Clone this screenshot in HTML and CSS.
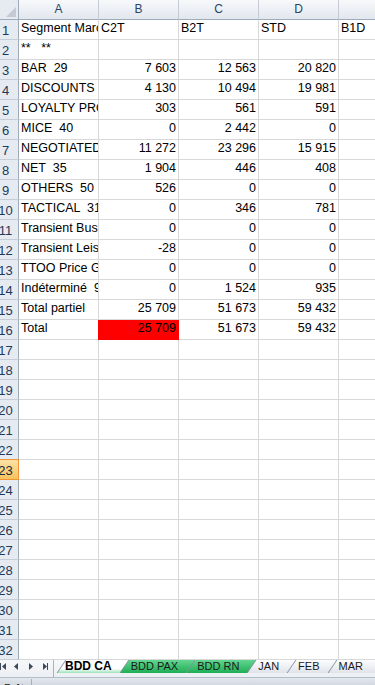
FILE: index.html
```html
<!DOCTYPE html>
<html lang="fr">
    <head>
        <meta charset="UTF-8">
        <meta name="viewport" content="width=device-width, initial-scale=1.0">
        <title>BDD CA</title>
        <link rel="stylesheet" href="styles.css">
    </head>
    <body>
        <div class="sheet">
            <div class="row head">
                <div class="corner"></div>
                <div class="col">A</div>
                <div class="col">B</div>
                <div class="col">C</div>
                <div class="col">D</div>
                <div class="col">E</div>
            </div>
            <div class="row"><div class="rh">1</div><div>Segment Marché</div><div>C2T</div><div>B2T</div><div>STD</div><div>B1D</div></div>
            <div class="row"><div class="rh">2</div><div>**   **</div><div></div><div></div><div></div><div></div></div>
            <div class="row"><div class="rh">3</div><div>BAR  29</div><div class="num">7 603</div><div class="num">12 563</div><div class="num">20 820</div><div></div></div>
            <div class="row"><div class="rh">4</div><div>DISCOUNTS  32</div><div class="num">4 130</div><div class="num">10 494</div><div class="num">19 981</div><div></div></div>
            <div class="row"><div class="rh">5</div><div>LOYALTY PROGRAM</div><div class="num">303</div><div class="num">561</div><div class="num">591</div><div></div></div>
            <div class="row"><div class="rh">6</div><div>MICE  40</div><div class="num">0</div><div class="num">2 442</div><div class="num">0</div><div></div></div>
            <div class="row"><div class="rh">7</div><div>NEGOTIATED  33</div><div class="num">11 272</div><div class="num">23 296</div><div class="num">15 915</div><div></div></div>
            <div class="row"><div class="rh">8</div><div>NET  35</div><div class="num">1 904</div><div class="num">446</div><div class="num">408</div><div></div></div>
            <div class="row"><div class="rh">9</div><div>OTHERS  50</div><div class="num">526</div><div class="num">0</div><div class="num">0</div><div></div></div>
            <div class="row"><div class="rh">10</div><div>TACTICAL  31</div><div class="num">0</div><div class="num">346</div><div class="num">781</div><div></div></div>
            <div class="row"><div class="rh">11</div><div>Transient Business</div><div class="num">0</div><div class="num">0</div><div class="num">0</div><div></div></div>
            <div class="row"><div class="rh">12</div><div>Transient Leisure</div><div class="num">-28</div><div class="num">0</div><div class="num">0</div><div></div></div>
            <div class="row"><div class="rh">13</div><div>TTOO Price Group</div><div class="num">0</div><div class="num">0</div><div class="num">0</div><div></div></div>
            <div class="row"><div class="rh">14</div><div>Indéterminé  99</div><div class="num">0</div><div class="num">1 524</div><div class="num">935</div><div></div></div>
            <div class="row"><div class="rh">15</div><div>Total partiel</div><div class="num">25 709</div><div class="num">51 673</div><div class="num">59 432</div><div></div></div>
            <div class="row"><div class="rh">16</div><div>Total</div><div class="num red">25 709</div><div class="num">51 673</div><div class="num">59 432</div><div></div></div>
            <div class="row"><div class="rh">17</div><div></div><div></div><div></div><div></div><div></div></div>
            <div class="row"><div class="rh">18</div><div></div><div></div><div></div><div></div><div></div></div>
            <div class="row"><div class="rh">19</div><div></div><div></div><div></div><div></div><div></div></div>
            <div class="row"><div class="rh">20</div><div></div><div></div><div></div><div></div><div></div></div>
            <div class="row"><div class="rh">21</div><div></div><div></div><div></div><div></div><div></div></div>
            <div class="row"><div class="rh">22</div><div></div><div></div><div></div><div></div><div></div></div>
            <div class="row"><div class="rh sel">23</div><div></div><div></div><div></div><div></div><div></div></div>
            <div class="row"><div class="rh">24</div><div></div><div></div><div></div><div></div><div></div></div>
            <div class="row"><div class="rh">25</div><div></div><div></div><div></div><div></div><div></div></div>
            <div class="row"><div class="rh">26</div><div></div><div></div><div></div><div></div><div></div></div>
            <div class="row"><div class="rh">27</div><div></div><div></div><div></div><div></div><div></div></div>
            <div class="row"><div class="rh">28</div><div></div><div></div><div></div><div></div><div></div></div>
            <div class="row"><div class="rh">29</div><div></div><div></div><div></div><div></div><div></div></div>
            <div class="row"><div class="rh">30</div><div></div><div></div><div></div><div></div><div></div></div>
            <div class="row"><div class="rh">31</div><div></div><div></div><div></div><div></div><div></div></div>
            <div class="row"><div class="rh">32</div><div></div><div></div><div></div><div></div><div></div></div>
        </div>

        <div class="tabbar">
            <svg class="nav" width="55" height="17" viewBox="0 0 55 17">
                <rect x="0" y="3" width="1" height="7" fill="#3c4a5c"/>
                <polygon points="2,6.5 6,3 6,10" fill="#3c4a5c"/>
                <polygon points="14,6.5 18,3 18,10" fill="#3c4a5c"/>
                <polygon points="33,6.5 29,3 29,10" fill="#3c4a5c"/>
                <polygon points="47,6.5 43,3 43,10" fill="#3c4a5c"/>
                <rect x="47" y="3" width="1" height="7" fill="#3c4a5c"/>
                <rect x="53" y="0" width="1" height="17" fill="#a9b3c0"/>
            </svg>
            <div class="tabs">
                <span class="tab active">BDD CA</span>
                <span class="tab green">BDD PAX</span>
                <span class="tab green">BDD RN</span>
                <span class="tab">JAN</span>
                <span class="tab">FEB</span>
                <span class="tab">MAR</span>
            </div>
        </div>

        <div class="status"><span>Prêt</span></div>
    </body>
</html>
```
FILE: styles.css
```css
body {
    margin: 0;
    width: 375px;
    height: 685px;
    overflow: hidden;
    background: #fff;
    font-family: "Liberation Sans", Arial, sans-serif;
}
.sheet {
    margin-left: -7px;
    width: 426px;
}
.row {
    display: grid;
    grid-template-columns: 26px repeat(5, 80px);
}
.row > div {
    box-sizing: border-box;
    height: 20px;
    padding: 0 2px;
    border-right: 1px solid #d8d8d8;
    border-bottom: 1px solid #d8d8d8;
    overflow: hidden;
    white-space: pre;
    font-size: 12.5px;
    line-height: 16px;
    color: #000;
}
.row > .num {
    text-align: right;
}
.row > .red {
    background: #f00;
    border-color: #f00;
    box-shadow: -1px 0 0 #f00;
}
.row > .rh {
    padding: 1px 0 0;
    display: flex;
    justify-content: center;
    background: #e6ebf1;
    border-right-color: #9eabbb;
    border-bottom-color: #c6cdd6;
    color: #1e395b;
    font-size: 13px;
    line-height: 19px;
}
.row > .rh.sel {
    background: linear-gradient(#fbe2a6, #f6c35e);
    border-right-color: #f29436;
    border-bottom-color: #f29436;
    box-shadow: 0 -1px 0 #f29436;
    color: #1b2a3d;
}
.head > .col,
.head > .corner {
    background: linear-gradient(#f7f9fb, #e2e7ee);
    border-right-color: #c5ccd6;
    border-bottom-color: #9eabbb;
    text-align: center;
    color: #2a4466;
    font-size: 12px;
    line-height: 19px;
}
.head > .corner {
    position: relative;
    background: #e6ebf1;
    border-right-color: #9eabbb;
}
.corner::after {
    content: "";
    position: absolute;
    right: 2px;
    bottom: 2px;
    width: 10px;
    height: 10px;
    background: #c3cad4;
    clip-path: polygon(100% 0, 100% 100%, 0 100%);
}

.tabbar {
    display: flex;
    height: 17px;
    background: linear-gradient(#f7f8fa, #eceff3);
}
.nav {
    display: block;
    flex: none;
}
.tabs {
    display: flex;
    height: 13px;
    margin-left: 2px;
}
.tab {
    position: relative;
    z-index: 0;
    margin-left: -9px;
    padding: 0 17px 0 11px;
    font-size: 11px;
    line-height: 13px;
    color: #1a1a1a;
    white-space: nowrap;
}
.tab:first-child {
    margin-left: 0;
    padding-left: 8px;
}
.tab::before {
    content: "";
    position: absolute;
    inset: 0;
    z-index: -1;
    background: linear-gradient(#fdfdfe, #dfe4ea);
    clip-path: polygon(0 100%, 9px 0, 100% 0, 100% 100%);
}
.tab::after {
    content: "";
    position: absolute;
    left: 4px;
    top: 0;
    width: 1px;
    height: 100%;
    background: #8793a2;
    transform: skewX(-34deg);
}
.tab.green::before {
    background: linear-gradient(#62d690, #1fae55);
}
.tab.active {
    font-size: 12px;
    font-weight: bold;
    color: #000;
}
.tab.active::before {
    background: linear-gradient(#fff 65%, #9fe3b9);
}

.status {
    box-sizing: border-box;
    height: 8px;
    border-top: 1px solid #b3bdc9;
    background: linear-gradient(#e4e8ee, #d3d9e1);
    overflow: hidden;
}
.status span {
    display: inline-block;
    width: 27px;
    padding: 3px 0 0 4px;
    border-right: 1px solid #a6b0bc;
    font-size: 11px;
    line-height: 13px;
    color: #222;
}
```
